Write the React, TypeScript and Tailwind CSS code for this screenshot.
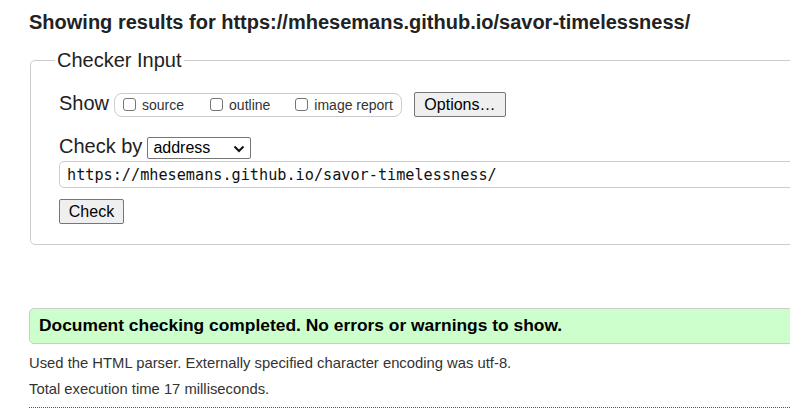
import React from "react";

function Box({ label, className = "" }: { label: string; className?: string }) {
  return (
    <span className={"flex items-center " + className}>
      <span className="self-start mt-[1px] w-[13px] h-[13px] border border-[#767676] rounded-[3px] bg-white" />
      <span className="ml-[6px] text-[14px] leading-[16px] text-[#333]">{label}</span>
    </span>
  );
}

export default function App() {
  return (
    <div className="w-[790px] h-[411px] overflow-hidden bg-white font-['Liberation_Sans',Arial,sans-serif] text-[#222]">
      <div className="w-[1100px] pl-[29px]">
        <h2 className="pt-[11px] text-[20px] leading-[23px] font-bold text-[#222]">
          Showing results for https://mhesemans.github.io/savor-timelessness/
        </h2>

        <fieldset className="mt-[15px] ml-[1px] border border-[#ccc] rounded-[5px] pl-[28px] pr-[20px] pb-[20px]">
          <legend className="-ml-[4px] px-[2px] text-[20px] leading-[23px] text-[#222]">Checker Input</legend>

          <div className="mt-[20px] flex items-start h-[25px]">
            <span className="text-[20px] leading-[23px]">Show</span>
            <div className="ml-[5px] mt-[1px] h-[24px] border border-[#ccc] rounded-[8px] flex items-center pl-[8px] pr-[8px]">
              <Box label="source" />
              <Box label="outline" className="ml-[26px]" />
              <Box label="image report" className="ml-[25px]" />
            </div>
            <button className="ml-[12px] w-[92px] h-[25px] bg-[#efefef] border border-[#767676] rounded-[2px] text-[16px] leading-[18px] text-black">
              Options…
            </button>
          </div>

          <div className="mt-[18px] flex items-start">
            <span className="text-[20px] leading-[23px]">Check by</span>
            <div className="ml-[5px] mt-[2px] h-[22px] w-[104px] border border-[#767676] rounded-[2px] flex items-center justify-between pl-[5px] pr-[5px] text-[16px] leading-[18px] text-black bg-white">
              <span>address</span>
              <svg width="12" height="8" viewBox="0 0 12 8" className="mt-[1px]">
                <path d="M1.5 1.5 L6 6 L10.5 1.5" fill="none" stroke="#111" strokeWidth="2" />
              </svg>
            </div>
          </div>

          <div className="mt-[2px] h-[27px] border border-[#ccc] rounded-[5px] flex items-center pl-[7px] bg-white">
            <span className="font-['DejaVu_Sans_Mono',monospace] text-[15.2px] leading-[18px] text-[#111]">
              https://mhesemans.github.io/savor-timelessness/
            </span>
          </div>

          <button className="mt-[11px] w-[65px] h-[25px] bg-[#efefef] border border-[#767676] rounded-[2px] text-[16px] leading-[18px] text-black">
            Check
          </button>
        </fieldset>

        <div className="mt-[63px] h-[36px] border border-[#ccc] rounded-[5px] bg-[#ccffcc] pl-[9px] pt-[6px]">
          <p className="text-[17.4px] leading-[20px] font-bold text-black">
            Document checking completed. No errors or warnings to show.
          </p>
        </div>

        <p className="mt-[11px] text-[14.8px] leading-[17px] text-[#333]">
          Used the HTML parser. Externally specified character encoding was utf-8.
        </p>
        <p className="mt-[9px] text-[14.8px] leading-[17px] text-[#333]">
          Total execution time 17 milliseconds.
        </p>
        <div className="mt-[9px] border-t border-dotted border-[#555]" />
      </div>
    </div>
  );
}
